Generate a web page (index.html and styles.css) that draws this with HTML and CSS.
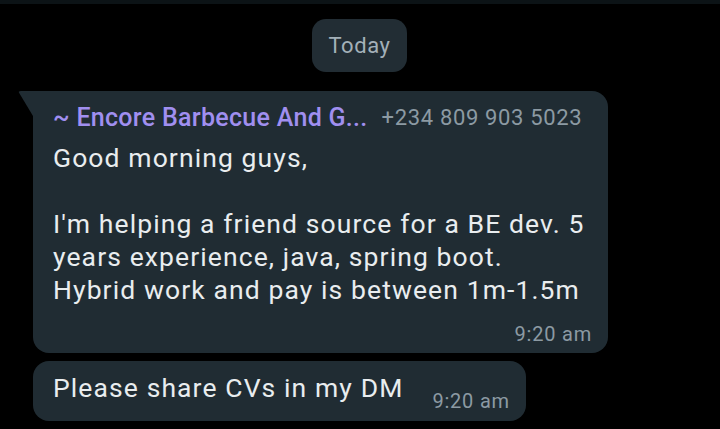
FILE: index.html
```html
<!DOCTYPE html>
<html>
<head>
<meta charset="utf-8">
<link rel="stylesheet" href="styles.css">
</head>
<body>
<div class="topbar"></div>
<div class="chat">
  <div class="date-row"><span class="date-pill">Today</span></div>
  <div class="bubble bubble-first">
    <div class="sender-row">
      <span class="sender-name">~ Encore Barbecue And G...</span>
      <span class="sender-phone">+234 809 903 5023</span>
    </div>
    <div class="msg-text">Good morning guys,<br><br>I'm helping a friend source for a BE dev. 5<br>years experience, java, spring boot.<br>Hybrid work and pay is between 1m-1.5m</div>
    <div class="msg-footer"><span class="msg-time">9:20 am</span></div>
  </div>
  <div class="bubble bubble-short">
    <span class="msg-text">Please share CVs in my DM</span>
    <span class="msg-time short-time">9:20 am</span>
  </div>
</div>
</body>
</html>
```
FILE: styles.css
```css
html, body {
  margin: 0;
  padding: 0;
  background: #000;
  height: 100%;
  overflow: hidden;
  font-family: Roboto, "Noto Sans", sans-serif;
}
.topbar {
  height: 4px;
  background: #0c1316;
}
.chat {
  display: flex;
  flex-direction: column;
  align-items: flex-start;
  padding: 0 0 0 33px;
}
.date-row {
  align-self: stretch;
  display: flex;
  justify-content: flex-start;
  padding-left: 279px;
  margin-top: 15px;
}
.date-pill {
  display: flex;
  align-items: center;
  justify-content: center;
  width: 95px;
  height: 53px;
  border-radius: 14px;
  background: #222d34;
  color: #a3b0b8;
  font-size: 22px;
  letter-spacing: 0.6px;
}
.bubble {
  position: relative;
  background: #202c33;
  border-radius: 16px;
  box-sizing: border-box;
}
.bubble-first {
  margin-top: 19px;
  width: 575px;
  height: 262px;
  padding: 6px 16px 6px 20px;
  border-top-left-radius: 0;
}
.bubble-first::before {
  content: "";
  position: absolute;
  left: -15px;
  top: 0;
  width: 15px;
  height: 25px;
  background: #202c33;
  clip-path: polygon(0 0, 100% 0, 100% 100%);
  border-top-left-radius: 3px;
}
.sender-row {
  display: flex;
  align-items: center;
  height: 40px;
  gap: 14px;
  white-space: nowrap;
}
.sender-name {
  color: #a08ff0;
  font-size: 25px;
  font-weight: 500;
  letter-spacing: 0.3px;
}
.sender-phone {
  color: #8c9aa3;
  font-size: 22px;
  letter-spacing: 0.65px;
}
.msg-text {
  color: #e9edef;
  font-size: 26.5px;
  line-height: 33px;
  letter-spacing: 1.1px;
  white-space: nowrap;
}
.bubble-first .msg-text {
  margin-top: 4px;
}
.msg-footer {
  display: flex;
  justify-content: flex-end;
  margin-top: 16px;
}
.msg-time {
  color: #8c9aa3;
  font-size: 20px;
  line-height: 24px;
  letter-spacing: 0.8px;
}
.bubble-short {
  margin-top: 8px;
  display: flex;
  align-items: flex-start;
  gap: 29px;
  padding: 10px 16px 8px 20px;
}
.short-time {
  margin-top: 18px;
}
```
